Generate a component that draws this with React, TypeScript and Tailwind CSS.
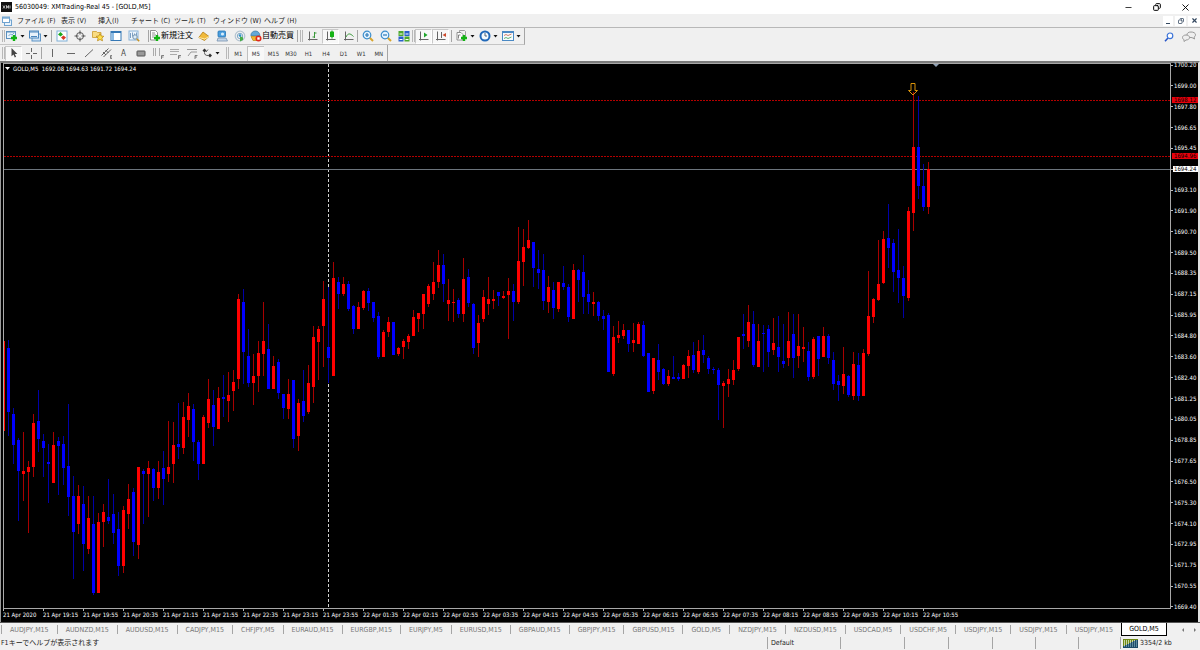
import type { ReactNode } from 'react'
import { clsx } from 'clsx'
import { Copy, Minus, X } from 'lucide-react'

// [direction, high, body top, body bottom, low], one entry every 5 units along x
type Candle = [dir: 'u' | 'd', high: number, top: number, bottom: number, low: number]

const candles: Candle[] = [
  ['u', 340, 341, 431, 463], ['d', 340, 348, 412, 436], ['d', 408, 414, 445, 464], ['d', 438, 440, 471, 521],
  ['u', 432, 471, 474, 501], ['u', 461, 467, 472, 533], ['u', 414, 423, 467, 477], ['d', 390, 421, 439, 452],
  ['d', 434, 441, 448, 477], ['d', 444, 462, 464, 503], ['u', 432, 445, 483, 483], ['d', 437, 441, 446, 495],
  ['d', 436, 444, 468, 485], ['d', 404, 466, 497, 516], ['d', 476, 496, 532, 579], ['u', 485, 496, 524, 534],
  ['d', 486, 504, 544, 571], ['u', 496, 518, 549, 554], ['d', 496, 524, 593, 595], ['u', 513, 522, 593, 593],
  ['u', 504, 512, 522, 547], ['d', 479, 517, 521, 524], ['d', 494, 514, 533, 544], ['d', 512, 529, 566, 576],
  ['u', 506, 510, 566, 573], ['u', 484, 499, 514, 529], ['d', 488, 492, 542, 556], ['u', 467, 467, 545, 559],
  ['d', 469, 471, 474, 524], ['u', 461, 468, 474, 517], ['d', 468, 469, 488, 501], ['u', 461, 472, 488, 499],
  ['d', 451, 468, 479, 505], ['u', 421, 467, 474, 482], ['u', 422, 445, 464, 483], ['d', 403, 444, 447, 459],
  ['u', 402, 417, 448, 454], ['u', 393, 406, 420, 437], ['d', 404, 409, 442, 461], ['d', 440, 442, 464, 480],
  ['u', 415, 417, 464, 464], ['u', 379, 399, 423, 428], ['d', 390, 405, 427, 446], ['u', 387, 398, 429, 429],
  ['d', 375, 397, 399, 417], ['u', 372, 395, 401, 422], ['u', 370, 382, 391, 411], ['u', 294, 299, 379, 389],
  ['d', 289, 302, 352, 384], ['d', 329, 356, 383, 387], ['u', 354, 376, 383, 405], ['u', 341, 353, 376, 392],
  ['u', 302, 341, 354, 376], ['d', 324, 349, 389, 389], ['u', 356, 366, 389, 389], ['d', 359, 362, 393, 399],
  ['d', 394, 394, 408, 419], ['u', 379, 394, 409, 419], ['d', 380, 380, 439, 448], ['u', 399, 403, 436, 451],
  ['d', 370, 401, 416, 422], ['u', 365, 383, 412, 414], ['u', 326, 337, 387, 403], ['u', 326, 329, 342, 380],
  ['u', 281, 299, 326, 367], ['d', 287, 347, 358, 383], ['u', 262, 278, 376, 376], ['d', 277, 282, 294, 309],
  ['u', 277, 284, 294, 296], ['d', 281, 284, 309, 311], ['d', 305, 306, 329, 334], ['u', 302, 307, 329, 329],
  ['u', 290, 291, 308, 310], ['d', 288, 291, 303, 311], ['d', 302, 302, 318, 322], ['d', 312, 316, 357, 359],
  ['u', 330, 332, 357, 357], ['u', 317, 322, 332, 337], ['d', 322, 322, 355, 355], ['u', 347, 348, 354, 356],
  ['u', 339, 341, 347, 359], ['u', 334, 336, 342, 349], ['u', 310, 317, 336, 336], ['u', 313, 313, 319, 332],
  ['u', 294, 294, 314, 329], ['u', 284, 286, 304, 307], ['u', 262, 282, 294, 300], ['u', 250, 265, 282, 288],
  ['d', 254, 265, 284, 302], ['u', 279, 300, 304, 321], ['u', 289, 302, 303, 322], ['d', 298, 300, 314, 318],
  ['u', 258, 279, 314, 322], ['d', 269, 277, 303, 307], ['d', 303, 304, 348, 354], ['u', 315, 323, 343, 357],
  ['u', 290, 297, 319, 322], ['u', 277, 299, 304, 315], ['u', 290, 299, 301, 309], ['d', 292, 292, 296, 306],
  ['u', 291, 296, 298, 299], ['u', 278, 291, 295, 339], ['d', 284, 291, 302, 321], ['u', 227, 261, 302, 304],
  ['u', 229, 247, 262, 286], ['u', 220, 240, 248, 249], ['d', 242, 242, 268, 287], ['d', 250, 269, 273, 289],
  ['d', 254, 270, 301, 310], ['u', 276, 287, 302, 313], ['d', 282, 290, 308, 319], ['u', 282, 282, 309, 312],
  ['d', 266, 283, 287, 290], ['d', 284, 287, 317, 322], ['u', 264, 270, 319, 319], ['d', 269, 270, 280, 302],
  ['d', 255, 272, 297, 314], ['d', 280, 294, 302, 314], ['u', 292, 302, 304, 316], ['d', 301, 302, 316, 321],
  ['d', 310, 316, 319, 330], ['d', 313, 315, 372, 372], ['u', 326, 337, 374, 376], ['u', 321, 335, 338, 343],
  ['u', 324, 330, 336, 339], ['d', 330, 330, 344, 352], ['u', 323, 340, 343, 352], ['u', 322, 324, 344, 344],
  ['d', 321, 325, 356, 357], ['d', 353, 353, 392, 392], ['u', 358, 358, 391, 394], ['d', 344, 360, 372, 380],
  ['d', 368, 369, 384, 385], ['u', 370, 376, 384, 386], ['d', 356, 377, 379, 379], ['d', 373, 377, 379, 381],
  ['u', 364, 365, 379, 379], ['u', 350, 356, 366, 378], ['d', 342, 355, 370, 373], ['u', 340, 351, 372, 374],
  ['d', 335, 350, 355, 363], ['d', 356, 358, 369, 374], ['d', 367, 369, 370, 374], ['d', 368, 370, 385, 420],
  ['u', 381, 383, 386, 428], ['u', 369, 379, 384, 397], ['u', 360, 370, 380, 385], ['u', 337, 337, 369, 371],
  ['d', 314, 334, 336, 349], ['u', 305, 322, 341, 347], ['d', 311, 324, 365, 367], ['u', 324, 341, 367, 367],
  ['d', 325, 333, 334, 372], ['d', 325, 329, 352, 367], ['u', 318, 343, 350, 355], ['d', 316, 347, 357, 372],
  ['d', 324, 361, 364, 368], ['u', 312, 341, 358, 366], ['d', 314, 334, 358, 378], ['u', 314, 346, 356, 368],
  ['u', 327, 347, 349, 362], ['d', 342, 351, 377, 381], ['u', 337, 339, 377, 379], ['d', 336, 336, 359, 376],
  ['u', 327, 336, 357, 357], ['d', 334, 336, 358, 364], ['d', 352, 360, 384, 390], ['d', 375, 381, 385, 401],
  ['u', 347, 374, 386, 394], ['d', 375, 376, 395, 397], ['u', 352, 364, 396, 400], ['d', 353, 365, 396, 401],
  ['u', 349, 353, 396, 396], ['u', 271, 316, 354, 356], ['u', 298, 299, 317, 323], ['u', 240, 284, 300, 301],
  ['u', 231, 239, 283, 284], ['d', 204, 238, 248, 268], ['d', 239, 243, 272, 292], ['d', 229, 270, 278, 303],
  ['d', 266, 278, 296, 318], ['u', 207, 211, 298, 301], ['u', 92, 147, 213, 231], ['d', 96, 147, 186, 199],
  ['d', 164, 186, 207, 211], ['u', 162, 169, 207, 214],
]

const prices = [
  '1700.20', '1699.00', '1697.80', '1696.65', '1695.45', '1694.24', '1693.10', '1691.90', '1690.70',
  '1689.50', '1688.35', '1687.15', '1685.95', '1684.80', '1683.60', '1682.40', '1681.25', '1680.05',
  '1678.85', '1677.65', '1676.50', '1675.30', '1674.10', '1672.95', '1671.75', '1670.55', '1669.40',
]

const times = [
  '21 Apr 2020', '21 Apr 19:15', '21 Apr 19:55', '21 Apr 20:35', '21 Apr 21:15', '21 Apr 21:55',
  '21 Apr 22:35', '21 Apr 23:15', '21 Apr 23:55', '22 Apr 01:35', '22 Apr 02:15', '22 Apr 02:55',
  '22 Apr 03:35', '22 Apr 04:15', '22 Apr 04:55', '22 Apr 05:35', '22 Apr 06:15', '22 Apr 06:55',
  '22 Apr 07:35', '22 Apr 08:15', '22 Apr 08:55', '22 Apr 09:35', '22 Apr 10:15', '22 Apr 10:55',
]

const menus = [
  { label: 'ファイル (F)', width: 'w-11' },
  { label: '表示 (V)', width: 'w-[37px]' },
  { label: '挿入(I)', width: 'w-[33px]' },
  { label: 'チャート (C)', width: 'w-[43px]' },
  { label: 'ツール (T)', width: 'w-[39px]' },
  { label: 'ウィンドウ (W)', width: 'w-[51px]' },
  { label: 'ヘルプ (H)', width: 'w-11' },
]

const timeframes = ['M1', 'M5', 'M15', 'M30', 'H1', 'H4', 'D1', 'W1', 'MN']

const tabs = [
  'AUDJPY,M15', 'AUDNZD,M15', 'AUDUSD,M15', 'CADJPY,M15', 'CHFJPY,M5', 'EURAUD,M15', 'EURGBP,M15',
  'EURJPY,M5', 'EURUSD,M15', 'GBPAUD,M15', 'GBPJPY,M15', 'GBPUSD,M15', 'GOLD,M5', 'NZDJPY,M15',
  'NZDUSD,M15', 'USDCAD,M5', 'USDCHF,M5', 'USDJPY,M15', 'USDJPY,M15', 'USDJPY,M15',
]

function Svg({ children }: { children: ReactNode }) {
  return (
    <svg viewBox="0 0 12 12" className="h-3 w-3 shrink-0" fill="none" aria-hidden="true">
      {children}
    </svg>
  )
}

function Plus({ x, y }: { x: number; y: number }) {
  return <path d={`M${x} ${y - 3}v6M${x - 3} ${y}h6`} stroke="#12b312" strokeWidth="2.4" />
}

const icons = {
  newChart: (
    <Svg>
      <rect x="0.5" y="1.5" width="9" height="7" fill="#eaf4fc" stroke="#5a8fbd" />
      <path d="M1 2h8" stroke="#5a8fbd" />
      <path d="M2.5 6l2-2 1.5 1 2-2" stroke="#7aa7cc" />
      <Plus x={8} y={8} />
    </Svg>
  ),
  profiles: (
    <Svg>
      <rect x="3" y="4" width="8.5" height="7" fill="#cfe2f3" stroke="#5f95c6" />
      <rect x="0.5" y="1" width="9" height="7" fill="#e8f2fb" stroke="#4a86bd" />
      <path d="M1 2h8M2 6.5h6" stroke="#4a86bd" />
    </Svg>
  ),
  marketWatch: (
    <Svg>
      <rect x="1" y="1" width="10" height="10" fill="#fdfefe" stroke="#7fb0d8" />
      <path d="M2 4.5l2.5-2.5 2.5 2.5-2.5 2z" fill="#1ca81c" />
      <path d="M5 7.5l2.5-2 2.5 2-2.5 2.5z" fill="#d83a28" />
    </Svg>
  ),
  target: (
    <Svg>
      <circle cx="6" cy="6" r="3.5" stroke="#555" />
      <path d="M6 0.5v4M6 7.5v4M0.5 6h4M7.5 6h4" stroke="#555" />
    </Svg>
  ),
  navigator: (
    <Svg>
      <path d="M0.5 1.5h4l1 1h3.5v5h-8.5z" fill="#f9dc83" stroke="#c99a2e" strokeWidth="0.8" />
      <path d="M8 3.5l1.2 2.5 2.6.3-1.9 1.8.6 2.7L8 9.5l-2.5 1.3.6-2.7-1.9-1.8 2.6-.3z" fill="#ffe04a" stroke="#bd8b1b" strokeWidth="0.8" />
    </Svg>
  ),
  dataWindow: (
    <Svg>
      <rect x="1" y="1.5" width="10" height="9" fill="#fff" stroke="#3578b5" />
      <path d="M1 2.5h10" stroke="#3578b5" />
      <rect x="1.5" y="3" width="2.5" height="7" fill="#8dbce4" />
    </Svg>
  ),
  tester: (
    <Svg>
      <rect x="1" y="1" width="9" height="9" fill="#edf5fc" stroke="#88b2d8" />
      <path d="M2.5 3v5M4.5 2.5v4M6.5 3.5v3M8.5 2.5v3" stroke="#5d89b5" strokeWidth="0.8" />
      <circle cx="7" cy="7" r="2.2" fill="#dcecf8" stroke="#7393ad" />
      <path d="M8.7 8.7l2.5 2.5" stroke="#c69324" strokeWidth="1.5" />
    </Svg>
  ),
  newOrder: (
    <Svg>
      <path d="M1.5 0.5h5l2 2v7.5h-7z" fill="#fff" stroke="#777" strokeWidth="0.8" />
      <path d="M3 3h3M3 5h4M3 7h2" stroke="#777" strokeWidth="0.8" />
      <Plus x={8} y={8} />
    </Svg>
  ),
  metaEditor: (
    <Svg>
      <path d="M0.8 7.5L5 2l6 4.5-4.5 4z" fill="#f0b93a" stroke="#b57e12" strokeWidth="0.8" />
      <path d="M0.8 7.5l6 1.5L11 6.5" stroke="#fff0b8" strokeWidth="0.9" />
    </Svg>
  ),
  terminal: (
    <Svg>
      <rect x="2" y="1" width="7.5" height="6" rx="1" fill="#4b9ede" stroke="#2473b2" strokeWidth="0.8" />
      <circle cx="6.5" cy="4" r="1.6" fill="#d8edfb" />
      <path d="M1 11l1-3h8l1.5 3z" fill="#c5d5e6" stroke="#7792b0" strokeWidth="0.8" />
    </Svg>
  ),
  signals: (
    <Svg>
      <circle cx="6" cy="6" r="4.8" stroke="#b3c3d0" strokeWidth="1.2" />
      <circle cx="6" cy="6" r="2.7" stroke="#85abc8" />
      <path d="M6 6v5.5l3-1.5V7.5z" fill="#48ac48" />
      <circle cx="6" cy="5.5" r="1.3" fill="#2d91c8" />
    </Svg>
  ),
  autoTrading: (
    <Svg>
      <path d="M1 6.5h8L8 10.5H3z" fill="#eeb62e" stroke="#b98413" strokeWidth="0.7" />
      <path d="M0.8 5.5C1 2.5 3 1 5.5 1S9.5 2.8 10 5.5z" fill="#62a8d8" stroke="#33769f" strokeWidth="0.7" />
      <circle cx="8.5" cy="8.5" r="3" fill="#e0281b" />
      <rect x="7.3" y="7.3" width="2.4" height="2.4" fill="#fff" />
    </Svg>
  ),
  bars: (
    <Svg>
      <path d="M2.5 1.5v9M1 9.5h9.5" stroke="#666" />
      <path d="M7.5 2v6M7.5 3h2M5.5 7h2" stroke="#3b9a3b" />
    </Svg>
  ),
  candle: (
    <Svg>
      <path d="M2.5 1.5v9M1 9.5h9.5" stroke="#666" />
      <path d="M7 0.5v8" stroke="#168c16" />
      <rect x="5" y="1.5" width="4" height="5.5" rx="0.5" fill="#17b417" />
    </Svg>
  ),
  line: (
    <Svg>
      <path d="M2.5 1.5v9M1 9.5h9.5" stroke="#666" />
      <path d="M3 7C5 3 7 3 10.5 6.5" stroke="#3b9a3b" />
    </Svg>
  ),
  zoomIn: (
    <Svg>
      <path d="M7.5 7.5l3.5 3.5" stroke="#d8a52c" strokeWidth="2" />
      <circle cx="5" cy="5" r="3.8" fill="#e5f4ff" stroke="#3a8dcc" strokeWidth="1.2" />
      <path d="M5 3v4M3 5h4" stroke="#2c79b8" strokeWidth="1.2" />
    </Svg>
  ),
  zoomOut: (
    <Svg>
      <path d="M7.5 7.5l3.5 3.5" stroke="#d8a52c" strokeWidth="2" />
      <circle cx="5" cy="5" r="3.8" fill="#e5f4ff" stroke="#3a8dcc" strokeWidth="1.2" />
      <path d="M3 5h4" stroke="#2c79b8" strokeWidth="1.2" />
    </Svg>
  ),
  tile: (
    <Svg>
      <rect x="0.5" y="1" width="5" height="5" fill="#4ca72d" />
      <rect x="6.5" y="1" width="5" height="5" fill="#2861c9" />
      <rect x="0.5" y="6.5" width="5" height="5" fill="#2861c9" />
      <rect x="6.5" y="6.5" width="5" height="5" fill="#4ca72d" />
      <path d="M1.5 4h3M7.5 4h3M1.5 9.5h3M7.5 9.5h3" stroke="#fff" strokeWidth="1.2" />
    </Svg>
  ),
  autoScroll: (
    <Svg>
      <path d="M2.5 1.5v9M1 9.5h9.5" stroke="#666" />
      <path d="M6 2.5v5l3.5-2.5z" fill="#1fa52c" />
    </Svg>
  ),
  chartShift: (
    <Svg>
      <path d="M2.5 1.5v9M1 9.5h9.5M6.5 2v6" stroke="#666" />
      <path d="M11 3v4L7.5 5z" fill="#cc4a2c" />
    </Svg>
  ),
  indicators: (
    <Svg>
      <path d="M3.5 0.5h5l1 1v7h-6z" fill="#f2f2f2" stroke="#888" strokeWidth="0.8" />
      <path d="M1 2.5h4l2 2v5.5H1z" fill="#fff" stroke="#777" strokeWidth="0.8" />
      <path d="M2.5 8.5V5h2" stroke="#666" strokeWidth="0.8" />
      <Plus x={8} y={8} />
    </Svg>
  ),
  periods: (
    <Svg>
      <circle cx="6" cy="6" r="4.5" fill="#f4faff" stroke="#2168b8" strokeWidth="2" />
      <path d="M6 3v3h2" stroke="#456" strokeWidth="0.9" />
    </Svg>
  ),
  templates: (
    <Svg>
      <rect x="0.5" y="1.5" width="11" height="9" fill="#f7fbff" stroke="#4a89c4" />
      <path d="M1 2.5h10" stroke="#4a89c4" />
      <path d="M2 5.5l2-1 2 1 3.5-1.5" stroke="#c45c3c" strokeWidth="0.8" />
      <path d="M2 8.5l2-1 2 1 3.5-1.5" stroke="#3ca04c" strokeWidth="0.8" />
    </Svg>
  ),
  cursor: (
    <Svg>
      <path d="M3.5 1v8.2l2-1.8 1.3 3 1.3-.6-1.3-2.8h2.6z" fill="#444" />
    </Svg>
  ),
  crosshair: (
    <Svg>
      <path d="M6.5 1v4M6.5 8v4M1 6.5h4M8 6.5h4" stroke="#666" />
    </Svg>
  ),
  vline: <Svg><path d="M5.5 2v8" stroke="#666" /></Svg>,
  hline: <Svg><path d="M2 6.5h8" stroke="#666" /></Svg>,
  trend: <Svg><path d="M2 10l8-7.5" stroke="#666" /></Svg>,
  channel: (
    <Svg>
      <path d="M0.5 8.5l7-7M2.5 10l7.5-7.5M2 5l3 3M4.5 3l3 3" stroke="#555" strokeWidth="0.9" />
      <path d="M11 8.5H9.5v3H11M9.5 10H11" stroke="#555" strokeWidth="0.7" />
    </Svg>
  ),
  box: (
    <Svg>
      <rect x="2" y="4" width="8" height="5" rx="0.5" fill="#999" stroke="#555" />
    </Svg>
  ),
  fiboTime: (
    <Svg>
      <path d="M1.5 1v8M3.5 1v8M7.5 1v8" stroke="#aaa" />
      <path d="M9.5 12V8.5H12M9.5 10H11.5" stroke="#666" strokeWidth="0.8" />
    </Svg>
  ),
  fibo: (
    <Svg>
      <path d="M1 2.5h9M1 4.5h9M1 7.5h7" stroke="#aaa" />
      <path d="M9.5 12V8.5H12M9.5 10H11.5" stroke="#666" strokeWidth="0.8" />
    </Svg>
  ),
  fiboFan: (
    <Svg>
      <path d="M1 2.5h10M2 9l3-4h6" stroke="#999" />
      <path d="M9 12V8.5H11.5M9 10H11" stroke="#666" strokeWidth="0.8" />
    </Svg>
  ),
  arrows: (
    <Svg>
      <path d="M3.5 1.5L5.5 3.5 3.5 5.5 1.5 3.5z" fill="#333" />
      <path d="M3.5 5.5c0 2 1 3 3.5 3M7 2.5L5 5" stroke="#333" strokeWidth="0.8" />
      <path d="M9 6.5l2 2-2 2-2-2z" fill="#333" />
    </Svg>
  ),
}

function Tool({ name, label, active, menu }: { name: keyof typeof icons; label: string; active?: boolean; menu?: boolean }) {
  return (
    <button
      type="button"
      aria-label={label}
      className={clsx(
        'flex h-[15px] shrink-0 items-center',
        menu ? 'w-[23px] justify-start gap-[2px] pl-px' : 'w-[17px] justify-center',
        active && 'border border-[#c8c8c8] border-r-white border-b-white bg-[#f8f8f8]',
      )}
    >
      {icons[name]}
      {menu && <Caret />}
    </button>
  )
}

function Caret() {
  return (
    <svg viewBox="0 0 5 3" className="h-[3px] w-[5px] shrink-0" aria-hidden="true">
      <path d="M0.5 0h4L2.5 2.5z" fill="#111" />
    </svg>
  )
}

function Sep({ className }: { className?: string }) {
  return <div className={clsx('h-3 w-px shrink-0 bg-[#a5a5a5]', className)} />
}

function Grip({ className }: { className?: string }) {
  return <div className={clsx('h-3 w-[3px] shrink-0 border-x border-x-[#b8b8b8]', className)} />
}

function TitleBar() {
  return (
    <header className="flex h-[14px] items-center bg-white pl-px">
      <svg viewBox="0 0 11 10" className="h-[10px] w-[11px]" aria-hidden="true">
        <rect width="11" height="10" fill="#111" />
        <path d="M2 3.5l2 3M4 3.5l-2 3M5.5 6.5v-3l1 2 1-2v3M9 3.5v3" stroke="#ddd" strokeWidth="0.8" fill="none" />
      </svg>
      <h1 className="ml-[3px] text-[7px] leading-[14px] text-black">56030049: XMTrading-Real 45 - [GOLD,M5]</h1>
      <div className="ml-auto flex items-center text-black">
        <button type="button" aria-label="Minimize" className="flex w-7 justify-center">
          <Minus className="h-[9px] w-[9px]" />
        </button>
        <button type="button" aria-label="Restore" className="flex w-[29px] justify-center">
          <Copy className="h-[8px] w-[8px] -scale-x-100" strokeWidth={3} />
        </button>
        <button type="button" aria-label="Close" className="flex w-[29px] justify-center">
          <X className="h-[11px] w-[11px]" />
        </button>
      </div>
    </header>
  )
}

function MenuBar() {
  return (
    <nav className="flex h-[14px] items-center border-b border-[#b8b8b8] pl-[2px]">
      <svg viewBox="0 0 10 10" className="mr-[5px] h-[10px] w-[10px]" fill="none" aria-hidden="true">
        <rect x="2.5" y="4" width="7" height="5.5" fill="#e8f2fb" stroke="#6fa3d0" />
        <rect x="0.5" y="1" width="7" height="5.5" fill="#fff" stroke="#6fa3d0" />
        <path d="M1 2h6" stroke="#3f83bd" />
      </svg>
      {menus.map((m) => (
        <button key={m.label} type="button" className={clsx('shrink-0 text-left text-[7px] leading-3 whitespace-nowrap text-[#222]', m.width)}>
          {m.label}
        </button>
      ))}
      <div className="ml-auto flex gap-[2px] text-[#33475f]">
        <button type="button" aria-label="Minimize chart" className="flex h-[10px] w-[10px] items-end justify-center bg-white pb-[2px]">
          <span className="h-px w-1 bg-[#33475f]" />
        </button>
        <button type="button" aria-label="Restore chart" className="flex h-[10px] w-[11px] items-center justify-center bg-white">
          <Copy className="h-[6px] w-[6px] -scale-x-100" strokeWidth={3} />
        </button>
        <button type="button" aria-label="Close chart" className="flex h-[10px] w-[12px] items-center justify-center bg-white">
          <X className="h-[7px] w-[7px]" strokeWidth={4} />
        </button>
      </div>
    </nav>
  )
}

function MainToolbar() {
  return (
    <div className="flex h-[17px] items-center">
      <div className="flex h-[17px] shrink-0 items-center border-r border-b border-r-[#a5a5a5] border-b-[#c4c4c4] pl-[2px]">
        <Grip />
        <Tool name="newChart" label="New chart" menu />
        <Tool name="profiles" label="Profiles" menu />
        <Sep className="mr-px" />
        <div className="flex gap-px">
          <Tool name="marketWatch" label="Market watch" />
          <Tool name="target" label="Data window" />
          <Tool name="navigator" label="Navigator" />
          <Tool name="dataWindow" label="Terminal" />
          <Tool name="tester" label="Strategy tester" />
        </div>
        <Sep className="ml-[6px]" />
        <button type="button" className="flex items-center text-[8px] leading-3 whitespace-nowrap text-black">
          {icons.newOrder}
          新規注文
        </button>
        <div className="flex gap-px px-[2px]">
          <Tool name="metaEditor" label="Meta editor" />
          <Tool name="terminal" label="Trading server" />
          <Tool name="signals" label="Signals" />
        </div>
        <button type="button" className="flex items-center text-[8px] leading-3 whitespace-nowrap text-black">
          {icons.autoTrading}
          自動売買
        </button>
        <Sep className="mr-px ml-[3px]" />
        <Grip className="mx-px" />
        <div className="flex gap-px">
          <Tool name="bars" label="Bar chart" />
          <Tool name="candle" label="Candlesticks" active />
          <Tool name="line" label="Line chart" />
        </div>
        <Sep className="mr-px" />
        <div className="flex gap-px">
          <Tool name="zoomIn" label="Zoom in" />
          <Tool name="zoomOut" label="Zoom out" />
          <Tool name="tile" label="Tile windows" />
        </div>
        <Grip />
        <Tool name="autoScroll" label="Auto scroll" active />
        <Tool name="chartShift" label="Chart shift" active />
        <Sep className="mr-[3px] ml-[2px]" />
        <Tool name="indicators" label="Indicators" menu />
        <Tool name="periods" label="Periods" menu />
        <Tool name="templates" label="Templates" menu />
      </div>
      <div className="ml-auto flex items-center gap-2 pr-1">
        <button type="button" aria-label="Search">
          <svg viewBox="0 0 10 10" className="h-[10px] w-[10px]" fill="none" aria-hidden="true">
            <path d="M4 6L1 9.2" stroke="#2856c8" strokeWidth="1.5" />
            <circle cx="6" cy="3.8" r="2.8" fill="#fff" stroke="#3c74d8" strokeWidth="1.2" />
          </svg>
        </button>
        <button type="button" aria-label="Chat">
          <svg viewBox="0 0 14 11" className="h-[11px] w-[14px]" fill="#eee" stroke="#999" aria-hidden="true">
            <path d="M9 1c2.5 0 4.5 1 4.5 2.8 0 1-.6 1.8-1.5 2.2l.6 2L10 6.6C7 6.8 5 5.5 5 3.8S6.5 1 9 1z" />
            <path d="M4 4c2 0 3.5 1 3.5 2.5S6 9 4 9L2 10.5V8.6C1 8.2.5 7.5.5 6.5.5 5 2 4 4 4z" />
          </svg>
        </button>
      </div>
    </div>
  )
}

function DrawToolbar() {
  return (
    <div className="flex h-4 items-center">
      <div className="flex h-4 shrink-0 items-center border-r border-[#a5a5a5] pl-[2px]">
        <Grip />
        <Tool name="cursor" label="Cursor" active />
        <Tool name="crosshair" label="Crosshair" />
        <Sep className="mr-[2px] ml-[2px]" />
        <div className="flex gap-px">
          <Tool name="vline" label="Vertical line" />
          <Tool name="hline" label="Horizontal line" />
          <Tool name="trend" label="Trend line" />
          <Tool name="channel" label="Channel" />
        </div>
        <button type="button" className="w-[17px] text-[8px] leading-[15px] text-[#444]">A</button>
        <Tool name="box" label="Text label" />
        <Tool name="fiboTime" label="Cycle lines" />
        <Tool name="fibo" label="Fibonacci" />
        <Tool name="fiboFan" label="Fibonacci fan" />
        <Tool name="arrows" label="Arrows" menu />
        <Grip className="ml-[3px]" />
        <div className="flex w-[158px]">
          {timeframes.map((t) => (
            <button
              key={t}
              type="button"
              className={clsx(
                'h-[15px] flex-1 border-t border-l text-[6px] leading-[14px] text-[#333]',
                t === 'M5' ? 'border-[#c0c0c0] bg-[#f8f8f8]' : 'border-transparent',
              )}
            >
              {t}
            </button>
          ))}
        </div>
      </div>
    </div>
  )
}

function Plot() {
  return (
    <svg
      viewBox="4 64 1166 544"
      preserveAspectRatio="none"
      className="absolute inset-0 h-full w-full"
      shapeRendering="crispEdges"
      role="img"
      aria-label="GOLD,M5 candlestick chart"
    >
      <path d="M328.5 64V608" stroke="#d0d0d0" strokeDasharray="3 2" />
      <path d="M4 100.5H1170M4 156.5H1170" stroke="#b40000" strokeDasharray="2 1" />
      <path d="M4 169.5H1170" stroke="#6c747c" />
      {candles.map(([dir, high, top, bottom, low], i) => {
        const x = 3 + i * 5
        return (
          <g key={i}>
            <rect x={x} y={high} width="1" height={low - high} fill={dir === 'u' ? '#a80000' : '#0000a8'} />
            <rect x={x - 1} y={top} width="3" height={bottom - top} fill={dir === 'u' ? '#ff0000' : '#0000ff'} />
          </g>
        )
      })}
      <path d="M911 83.5h4v7h2.5L913 95l-4.5-4.5h2.5z" fill="none" stroke="#d9920a" shapeRendering="auto" />
      <path d="M933 64h6l-3 3z" fill="#8fa0b4" shapeRendering="auto" />
    </svg>
  )
}

function Chart() {
  return (
    <main className="grid min-h-0 flex-1 grid-cols-[1fr_27px] grid-rows-[1fr_13px] border-t-2 border-r-2 border-l border-t-[#7c7c7c] border-r-[#e0e0e0] border-l-[#999] bg-black pl-[2px] text-[6px] text-white">
      <section className="relative overflow-hidden border border-[#a8a8a8]">
        <Plot />
        <p className="relative flex items-center gap-[3px] pl-px leading-[9px]">
          <svg viewBox="0 0 5 3" className="h-[3px] w-[5px]" aria-hidden="true">
            <path d="M0 0h5L2.5 3z" fill="#fff" />
          </svg>
          <span>GOLD,M5&nbsp; 1692.08 1694.63 1691.72 1694.24</span>
        </p>
      </section>
      <aside className="relative">
        <ul className="flex h-full flex-col justify-between">
          {prices.map((p, i) => (
            <li key={p} className="flex h-1 items-center">
              <span className="h-px w-[2px] bg-[#bbb]" />
              <span className={clsx('pl-px leading-[6px]', i === 5 && 'grow bg-white text-black')}>{p}</span>
            </li>
          ))}
        </ul>
        <span className="absolute top-[34px] right-0 left-px bg-red-600 pl-[2px] leading-[6px] text-black">1698.12</span>
        <span className="absolute top-[90px] right-0 left-px bg-red-600 pl-[2px] leading-[6px] text-black">1694.96</span>
      </aside>
      <ul className="col-span-2 flex overflow-hidden">
        {times.map((t) => (
          <li key={t} className="w-10 shrink-0 whitespace-nowrap">
            <span className="block h-[2px] w-px bg-[#bbb]" />
            <span className="block leading-[8px]">{t}</span>
          </li>
        ))}
      </ul>
    </main>
  )
}

function TabBar() {
  return (
    <div role="tablist" className="flex h-[14px] border-t border-[#555] pr-[3px] pl-px text-[7px] leading-3 text-[#777]">
      {tabs.map((t, i) => (
        <button key={i} type="button" role="tab" aria-selected="false" className="flex flex-auto items-center justify-center whitespace-nowrap">
          <Sep className="h-[9px]" />
          <span className="grow text-center">{t}</span>
        </button>
      ))}
      <button type="button" role="tab" aria-selected="true" className="w-[46px] shrink-0 border border-t-0 border-black bg-white text-black">
        GOLD,M5
      </button>
      <div className="flex w-[30px] shrink-0 items-center justify-end gap-2 text-[#777]">
        <button type="button" aria-label="Scroll tabs left">
          <svg viewBox="0 0 4 4" className="h-1 w-1" aria-hidden="true"><path d="M3 0v4L1 2z" fill="currentColor" /></svg>
        </button>
        <button type="button" aria-label="Scroll tabs right">
          <svg viewBox="0 0 4 4" className="h-1 w-1" aria-hidden="true"><path d="M1 0v4l2-2z" fill="currentColor" /></svg>
        </button>
      </div>
    </div>
  )
}

function StatusBar() {
  return (
    <footer className="flex h-[14px] items-center pl-px text-[7px] leading-[14px] text-[#222]">
      <span className="grow">F1キーでヘルプが表示されます</span>
      <span className="flex w-[73px] items-center gap-[3px]"><Sep />Default</span>
      <span className="w-16"><Sep /></span>
      <span className="w-11"><Sep /></span>
      <span className="w-11"><Sep /></span>
      <span className="w-[43px]"><Sep /></span>
      <span className="w-[43px]"><Sep /></span>
      <span className="w-[42px]"><Sep /></span>
      <span className="flex w-20 items-center gap-[2px]">
        <Sep />
        <svg viewBox="0 0 15 9" className="h-[9px] w-[15px]" shapeRendering="crispEdges" aria-hidden="true">
          <rect width="15" height="9" fill="#c9d3a4" />
          {[0, 1, 2, 3, 4, 5, 6, 7].map((n) => (
            <g key={n}>
              <rect x={n * 2} y="0" width="1" height={7 - n} fill="#6f8a14" />
              <rect x={n * 2} y={7 - n} width="2" height={2 + n} fill="#5d8aa0" />
              <rect x={n * 2} y={7 - n} width="1" height={2 + n} fill="#1d4a68" />
            </g>
          ))}
          <path d="M0 0.5h15" stroke="#6f8a14" />
          <path d="M0 8.5h15" stroke="#1d4a68" />
        </svg>
        3354/2 kb
      </span>
    </footer>
  )
}

export default function App() {
  return (
    <div className="flex h-screen flex-col overflow-hidden bg-[#f0f0f0] font-['DejaVu_Sans_Condensed','Noto_Sans_CJK_JP',sans-serif]">
      <TitleBar />
      <MenuBar />
      <MainToolbar />
      <DrawToolbar />
      <Chart />
      <TabBar />
      <StatusBar />
    </div>
  )
}
